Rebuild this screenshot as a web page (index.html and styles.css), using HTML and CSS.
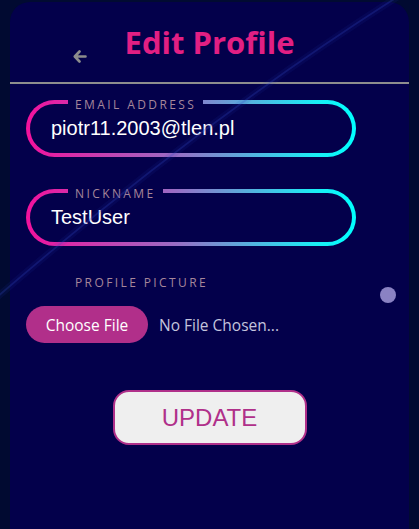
FILE: index.html
```html
<!DOCTYPE html>
<html lang="en">
<head>
<meta charset="utf-8">
<title>Edit Profile</title>
<link rel="stylesheet" href="styles.css">
</head>
<body>
<main class="card">
  <header class="header">
    <a class="back" href="#" aria-label="Back">
      <svg width="14" height="13" viewBox="0 0 14 13"><path d="M6.5 1.5 L1.8 6.5 L6.5 11.5 M2 6.5 H12.5" fill="none" stroke="#8c8c8c" stroke-width="2.6" stroke-linecap="round" stroke-linejoin="round"/></svg>
    </a>
    <h1 class="title">Edit Profile</h1>
  </header>
  <form class="form">
    <label class="field">
      <span class="field-label">EMAIL ADDRESS</span>
      <input class="field-input" type="text" value="piotr11.2003@tlen.pl">
    </label>
    <label class="field field-second">
      <span class="field-label">NICKNAME</span>
      <input class="field-input" type="text" value="TestUser">
    </label>
    <div class="pic-label">PROFILE PICTURE</div>
    <div class="file-row">
      <button type="button" class="file-btn">Choose File</button>
      <span class="file-name">No File Chosen...</span>
    </div>
    <div class="actions">
      <button type="button" class="update">UPDATE</button>
    </div>
  </form>
  <span class="dot"></span>
</main>
<svg class="beam" width="419" height="529" viewBox="0 0 419 529" aria-hidden="true">
  <path d="M402 -6 Q200 122 -4 298" fill="none" stroke="rgba(40,60,190,0.10)" stroke-width="7"/>
  <path d="M402 -6 Q200 122 -4 298" fill="none" stroke="rgba(50,75,200,0.25)" stroke-width="1.8"/>
</svg>
</body>
</html>
```
FILE: styles.css
```css
* { box-sizing: border-box; }

html, body {
  margin: 0;
  padding: 0;
  background: #010a31;
  overflow: hidden;
}

body {
  font-family: "Open Sans", "Noto Sans", sans-serif;
  height: 529px;
  position: relative;
}

.card {
  position: relative;
  margin: 2px 10px 0;
  min-height: 540px;
  background: #03004b;
  border-radius: 20px 20px 0 0;
}

.header {
  display: grid;
  grid-template-columns: 1fr auto 1fr;
  height: 82px;
  border-bottom: 2px solid #8e8e8e;
}

.back {
  grid-column: 1;
  justify-self: end;
  align-self: start;
  margin-top: 48px;
  margin-right: 38px;
  display: flex;
  line-height: 0;
}

.title {
  grid-column: 2;
  margin: 0;
  padding-top: 20px;
  font-size: 31px;
  line-height: 40px;
  font-weight: 700;
  color: #e21f83;
  letter-spacing: 0;
}

.form {
  padding: 16px 16px 0;
  display: flex;
  flex-direction: column;
}

.field {
  position: relative;
  display: flex;
  align-items: center;
  width: 330px;
  height: 57px;
  padding-left: 21px;
  border: 4px solid transparent;
  border-radius: 30px;
  background:
    linear-gradient(#03004b, #03004b) padding-box,
    linear-gradient(90deg, #f3119d 0%, #9a6cc4 45%, #19eef5 88%, #0ff 100%) border-box;
}

.field-second { margin-top: 32px; }

.field-label {
  position: absolute;
  top: -6px;
  left: 38px;
  padding: 0 7px;
  background: #03004b;
  font-size: 12px;
  line-height: 14px;
  letter-spacing: 2.4px;
  color: #a6879a;
}

.field-input {
  width: 100%;
  border: none;
  outline: none;
  background: transparent;
  padding: 0;
  font-family: "Liberation Sans", Arial, sans-serif;
  font-size: 20px;
  color: #ffffff;
}

.pic-label {
  margin-top: 29px;
  padding-left: 49px;
  font-size: 12px;
  line-height: 16px;
  letter-spacing: 2.4px;
  color: #a6879a;
}

.file-row {
  margin-top: 15px;
  display: flex;
  align-items: center;
  gap: 11px;
}

.file-btn {
  width: 122px;
  height: 37px;
  border: none;
  border-radius: 19px;
  background: #b12f8a;
  color: #ffffff;
  font-family: "Open Sans", sans-serif;
  font-size: 15.5px;
  padding: 0;
}

.file-name {
  font-size: 15.5px;
  color: #c4c4dd;
}

.actions {
  display: flex;
  justify-content: center;
  margin: 47px -16px 0;
}

.update {
  width: 194px;
  height: 55px;
  border: 2px solid #b0308a;
  border-radius: 16px;
  background: #efefef;
  color: #b0308a;
  font-family: "Liberation Sans", Arial, sans-serif;
  font-size: 24px;
  padding: 0;
}

.dot {
  position: absolute;
  left: 370px;
  top: 285px;
  width: 16px;
  height: 16px;
  border-radius: 50%;
  background: #8a82c3;
}

.beam {
  position: absolute;
  left: 0;
  top: 0;
  pointer-events: none;
}
```
